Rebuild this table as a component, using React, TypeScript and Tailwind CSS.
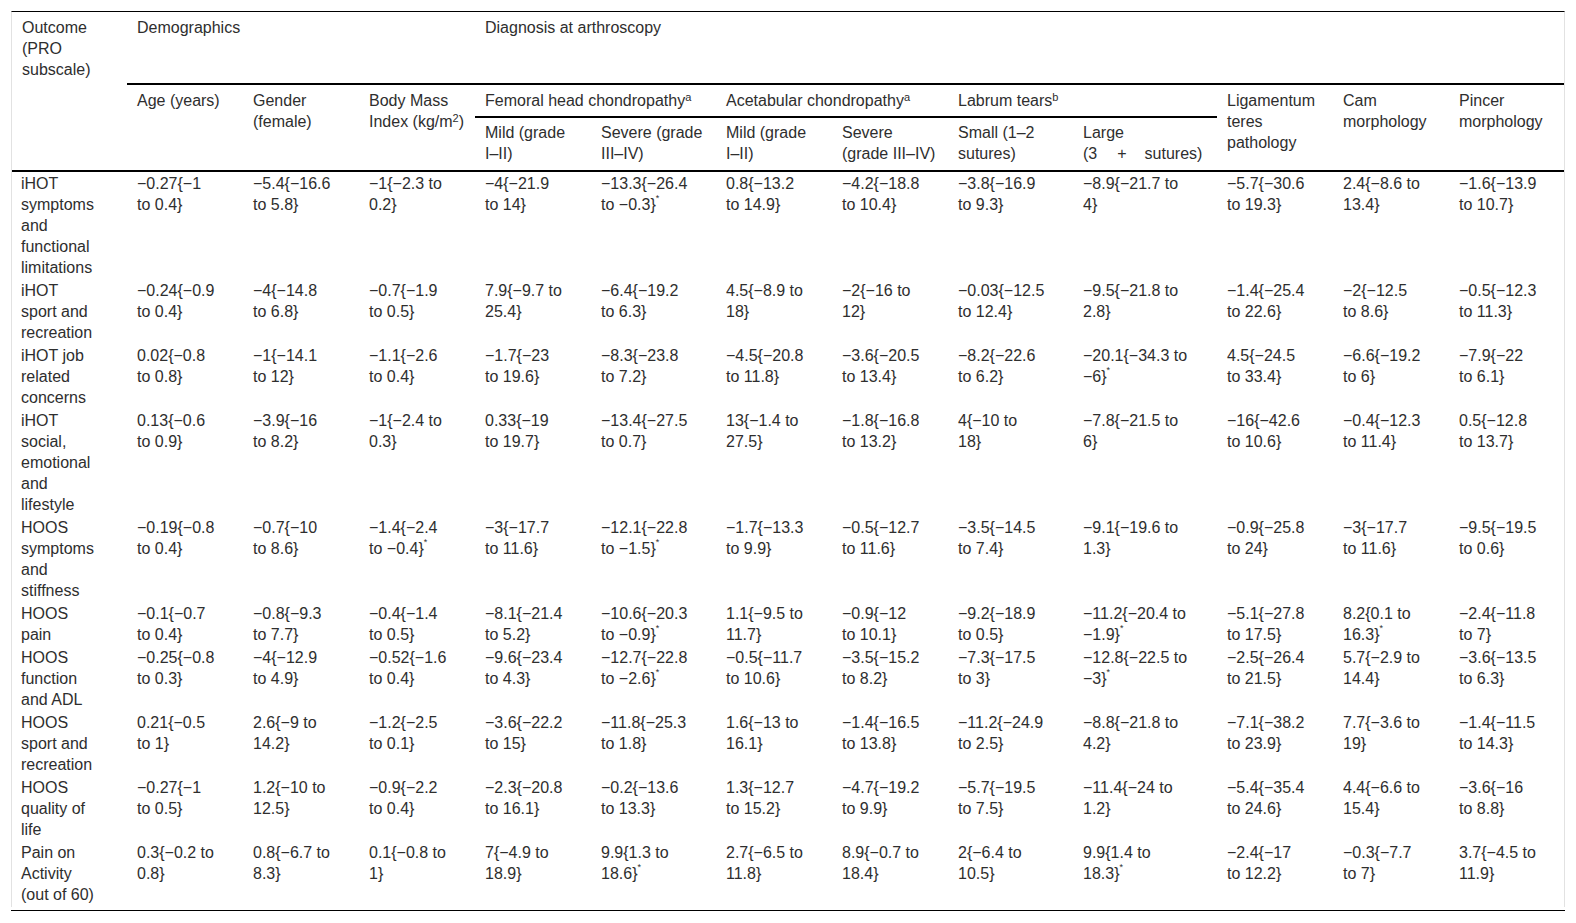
import React from 'react';

type Row = { outcome: string[]; cells: string[][] };

const rows: Row[] = [
  {
    outcome: ['iHOT', 'symptoms', 'and', 'functional', 'limitations'],
    cells: [
      ['−0.27{−1', 'to 0.4}'], ['−5.4{−16.6', 'to 5.8}'], ['−1{−2.3 to', '0.2}'],
      ['−4{−21.9', 'to 14}'], ['−13.3{−26.4', 'to −0.3}*'], ['0.8{−13.2', 'to 14.9}'],
      ['−4.2{−18.8', 'to 10.4}'], ['−3.8{−16.9', 'to 9.3}'], ['−8.9{−21.7 to', '4}'],
      ['−5.7{−30.6', 'to 19.3}'], ['2.4{−8.6 to', '13.4}'], ['−1.6{−13.9', 'to 10.7}'],
    ],
  },
  {
    outcome: ['iHOT', 'sport and', 'recreation'],
    cells: [
      ['−0.24{−0.9', 'to 0.4}'], ['−4{−14.8', 'to 6.8}'], ['−0.7{−1.9', 'to 0.5}'],
      ['7.9{−9.7 to', '25.4}'], ['−6.4{−19.2', 'to 6.3}'], ['4.5{−8.9 to', '18}'],
      ['−2{−16 to', '12}'], ['−0.03{−12.5', 'to 12.4}'], ['−9.5{−21.8 to', '2.8}'],
      ['−1.4{−25.4', 'to 22.6}'], ['−2{−12.5', 'to 8.6}'], ['−0.5{−12.3', 'to 11.3}'],
    ],
  },
  {
    outcome: ['iHOT job', 'related', 'concerns'],
    cells: [
      ['0.02{−0.8', 'to 0.8}'], ['−1{−14.1', 'to 12}'], ['−1.1{−2.6', 'to 0.4}'],
      ['−1.7{−23', 'to 19.6}'], ['−8.3{−23.8', 'to 7.2}'], ['−4.5{−20.8', 'to 11.8}'],
      ['−3.6{−20.5', 'to 13.4}'], ['−8.2{−22.6', 'to 6.2}'], ['−20.1{−34.3 to', '−6}*'],
      ['4.5{−24.5', 'to 33.4}'], ['−6.6{−19.2', 'to 6}'], ['−7.9{−22', 'to 6.1}'],
    ],
  },
  {
    outcome: ['iHOT', 'social,', 'emotional', 'and', 'lifestyle'],
    cells: [
      ['0.13{−0.6', 'to 0.9}'], ['−3.9{−16', 'to 8.2}'], ['−1{−2.4 to', '0.3}'],
      ['0.33{−19', 'to 19.7}'], ['−13.4{−27.5', 'to 0.7}'], ['13{−1.4 to', '27.5}'],
      ['−1.8{−16.8', 'to 13.2}'], ['4{−10 to', '18}'], ['−7.8{−21.5 to', '6}'],
      ['−16{−42.6', 'to 10.6}'], ['−0.4{−12.3', 'to 11.4}'], ['0.5{−12.8', 'to 13.7}'],
    ],
  },
  {
    outcome: ['HOOS', 'symptoms', 'and', 'stiffness'],
    cells: [
      ['−0.19{−0.8', 'to 0.4}'], ['−0.7{−10', 'to 8.6}'], ['−1.4{−2.4', 'to −0.4}*'],
      ['−3{−17.7', 'to 11.6}'], ['−12.1{−22.8', 'to −1.5}*'], ['−1.7{−13.3', 'to 9.9}'],
      ['−0.5{−12.7', 'to 11.6}'], ['−3.5{−14.5', 'to 7.4}'], ['−9.1{−19.6 to', '1.3}'],
      ['−0.9{−25.8', 'to 24}'], ['−3{−17.7', 'to 11.6}'], ['−9.5{−19.5', 'to 0.6}'],
    ],
  },
  {
    outcome: ['HOOS', 'pain'],
    cells: [
      ['−0.1{−0.7', 'to 0.4}'], ['−0.8{−9.3', 'to 7.7}'], ['−0.4{−1.4', 'to 0.5}'],
      ['−8.1{−21.4', 'to 5.2}'], ['−10.6{−20.3', 'to −0.9}*'], ['1.1{−9.5 to', '11.7}'],
      ['−0.9{−12', 'to 10.1}'], ['−9.2{−18.9', 'to 0.5}'], ['−11.2{−20.4 to', '−1.9}*'],
      ['−5.1{−27.8', 'to 17.5}'], ['8.2{0.1 to', '16.3}*'], ['−2.4{−11.8', 'to 7}'],
    ],
  },
  {
    outcome: ['HOOS', 'function', 'and ADL'],
    cells: [
      ['−0.25{−0.8', 'to 0.3}'], ['−4{−12.9', 'to 4.9}'], ['−0.52{−1.6', 'to 0.4}'],
      ['−9.6{−23.4', 'to 4.3}'], ['−12.7{−22.8', 'to −2.6}*'], ['−0.5{−11.7', 'to 10.6}'],
      ['−3.5{−15.2', 'to 8.2}'], ['−7.3{−17.5', 'to 3}'], ['−12.8{−22.5 to', '−3}*'],
      ['−2.5{−26.4', 'to 21.5}'], ['5.7{−2.9 to', '14.4}'], ['−3.6{−13.5', 'to 6.3}'],
    ],
  },
  {
    outcome: ['HOOS', 'sport and', 'recreation'],
    cells: [
      ['0.21{−0.5', 'to 1}'], ['2.6{−9 to', '14.2}'], ['−1.2{−2.5', 'to 0.1}'],
      ['−3.6{−22.2', 'to 15}'], ['−11.8{−25.3', 'to 1.8}'], ['1.6{−13 to', '16.1}'],
      ['−1.4{−16.5', 'to 13.8}'], ['−11.2{−24.9', 'to 2.5}'], ['−8.8{−21.8 to', '4.2}'],
      ['−7.1{−38.2', 'to 23.9}'], ['7.7{−3.6 to', '19}'], ['−1.4{−11.5', 'to 14.3}'],
    ],
  },
  {
    outcome: ['HOOS', 'quality of', 'life'],
    cells: [
      ['−0.27{−1', 'to 0.5}'], ['1.2{−10 to', '12.5}'], ['−0.9{−2.2', 'to 0.4}'],
      ['−2.3{−20.8', 'to 16.1}'], ['−0.2{−13.6', 'to 13.3}'], ['1.3{−12.7', 'to 15.2}'],
      ['−4.7{−19.2', 'to 9.9}'], ['−5.7{−19.5', 'to 7.5}'], ['−11.4{−24 to', '1.2}'],
      ['−5.4{−35.4', 'to 24.6}'], ['4.4{−6.6 to', '15.4}'], ['−3.6{−16', 'to 8.8}'],
    ],
  },
  {
    outcome: ['Pain on', 'Activity', '(out of 60)'],
    cells: [
      ['0.3{−0.2 to', '0.8}'], ['0.8{−6.7 to', '8.3}'], ['0.1{−0.8 to', '1}'],
      ['7{−4.9 to', '18.9}'], ['9.9{1.3 to', '18.6}*'], ['2.7{−6.5 to', '11.8}'],
      ['8.9{−0.7 to', '18.4}'], ['2{−6.4 to', '10.5}'], ['9.9{1.4 to', '18.3}*'],
      ['−2.4{−17', 'to 12.2}'], ['−0.3{−7.7', 'to 7}'], ['3.7{−4.5 to', '11.9}'],
    ],
  },
];

const colWidths = [115, 116, 116, 116, 116, 125, 116, 116, 125, 144, 116, 116, 115];

function Line({ text }: { text: string }) {
  if (text.endsWith('*')) {
    return (
      <div className="whitespace-nowrap">
        {text.slice(0, -1)}
        <sup className="text-[9px] top-[-0.95em]">*</sup>
      </div>
    );
  }
  return <div className="whitespace-nowrap">{text}</div>;
}

function Lines({ lines }: { lines: string[] }) {
  return (
    <>
      {lines.map((l, i) => (
        <Line key={i} text={l} />
      ))}
    </>
  );
}

const th = 'align-top text-left font-normal pl-[10px] pr-0';
const rule = 'border-b-2 border-black';

export default function App() {
  return (
    <div className="min-h-[923px] bg-white px-[11px] pt-[11px] font-['Liberation_Sans',Arial,sans-serif] text-[16px] leading-[21px] text-[#2e2e2e]">
      <div className="border-x border-t border-x-[#e2e2e2] border-t-black pb-px">
        <table className="w-[1552px] table-fixed border-separate border-spacing-0">
          <colgroup>
            {colWidths.map((w, i) => (
              <col key={i} style={{ width: w }} />
            ))}
          </colgroup>
          <thead>
            <tr className="h-[73px]">
              <th rowSpan={3} className={`${th} ${rule} pl-[9px] pt-[5px]`}>
                <Lines lines={['Outcome', '(PRO', 'subscale)']} />
              </th>
              <th colSpan={3} className={`${th} ${rule} pt-[5px]`}>
                Demographics
              </th>
              <th colSpan={9} className={`${th} ${rule} pt-[5px]`}>
                Diagnosis at arthroscopy
              </th>
            </tr>
            <tr className="h-[33px]">
              <th rowSpan={2} className={`${th} ${rule} pt-[5px]`}>
                <div className="whitespace-nowrap">Age (years)</div>
              </th>
              <th rowSpan={2} className={`${th} ${rule} pt-[5px]`}>
                <Lines lines={['Gender', '(female)']} />
              </th>
              <th rowSpan={2} className={`${th} ${rule} pt-[5px]`}>
                <div className="whitespace-nowrap">Body Mass</div>
                <div className="whitespace-nowrap">
                  Index (kg/m<sup className="text-[11px]">2</sup>)
                </div>
              </th>
              <th colSpan={2} className={`${th} ${rule} pt-[5px]`}>
                <div className="whitespace-nowrap">
                  Femoral head chondropathy<sup className="text-[11px]">a</sup>
                </div>
              </th>
              <th colSpan={2} className={`${th} ${rule} pt-[5px]`}>
                <div className="whitespace-nowrap">
                  Acetabular chondropathy<sup className="text-[11px]">a</sup>
                </div>
              </th>
              <th colSpan={2} className={`${th} ${rule} pt-[5px]`}>
                <div className="whitespace-nowrap">
                  Labrum tears<sup className="text-[11px]">b</sup>
                </div>
              </th>
              <th rowSpan={2} className={`${th} ${rule} pt-[5px]`}>
                <Lines lines={['Ligamentum', 'teres', 'pathology']} />
              </th>
              <th rowSpan={2} className={`${th} ${rule} pt-[5px]`}>
                <Lines lines={['Cam', 'morphology']} />
              </th>
              <th rowSpan={2} className={`${th} ${rule} pt-[5px]`}>
                <Lines lines={['Pincer', 'morphology']} />
              </th>
            </tr>
            <tr className="h-[54px]">
              <th className={`${th} ${rule} pt-[4px]`}>
                <Lines lines={['Mild (grade', 'I–II)']} />
              </th>
              <th className={`${th} ${rule} pt-[4px]`}>
                <Lines lines={['Severe (grade', 'III–IV)']} />
              </th>
              <th className={`${th} ${rule} pt-[4px]`}>
                <Lines lines={['Mild (grade', 'I–II)']} />
              </th>
              <th className={`${th} ${rule} pt-[4px]`}>
                <Lines lines={['Severe', '(grade III–IV)']} />
              </th>
              <th className={`${th} ${rule} pt-[4px]`}>
                <Lines lines={['Small (1–2', 'sutures)']} />
              </th>
              <th className={`${th} ${rule} pt-[4px]`}>
                <div className="whitespace-nowrap">Large</div>
                <div className="whitespace-nowrap">
                  (3<span className="inline-block w-[20px]" />+<span className="inline-block w-[18px]" />sutures)
                </div>
              </th>
            </tr>
          </thead>
          <tbody>
            {rows.map((r, ri) => (
              <tr key={ri}>
                <td className="align-top py-px pl-[9px]">
                  <Lines lines={r.outcome} />
                </td>
                {r.cells.map((c, ci) => (
                  <td key={ci} className="align-top py-px pl-[10px]">
                    <Lines lines={c} />
                  </td>
                ))}
              </tr>
            ))}
          </tbody>
        </table>
      </div>
      <div className="mt-[3px] h-px bg-black" />
    </div>
  );
}
